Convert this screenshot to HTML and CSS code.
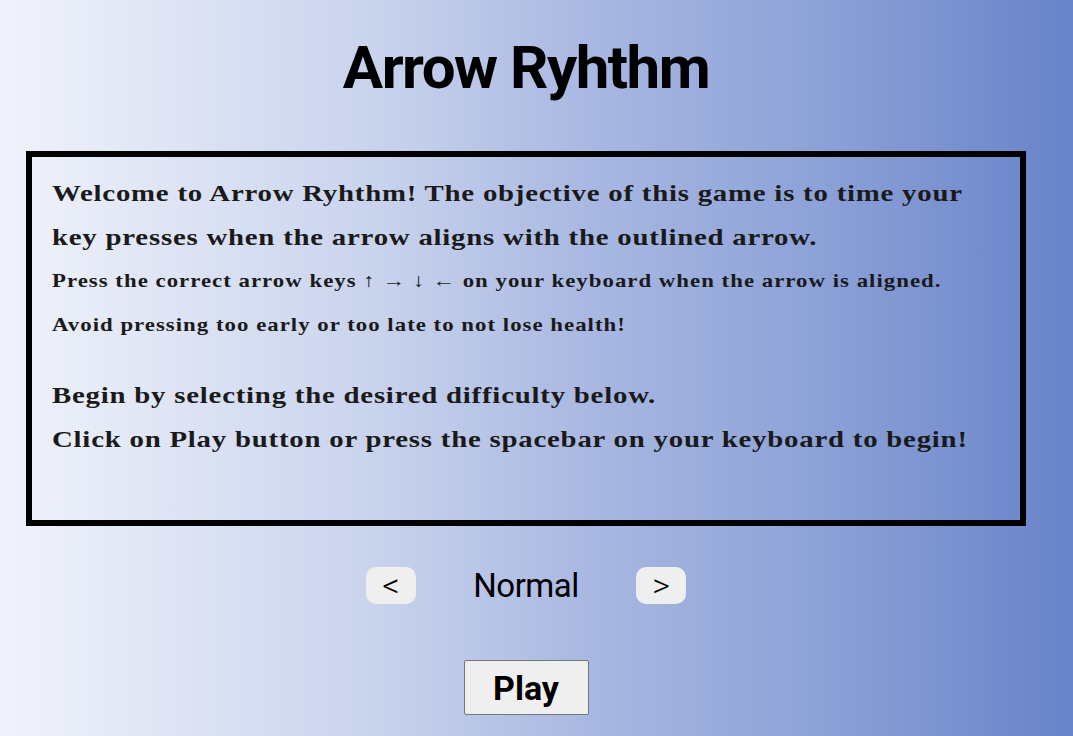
FILE: index.html
```html
<!DOCTYPE html>
<html>
<head>
<meta charset="utf-8">
<link rel="stylesheet" href="styles.css">
</head>
<body>
<main class="page">
  <h1 class="title">Arrow Ryhthm</h1>
  <section class="info">
    <p class="lead">Welcome to Arrow Ryhthm! The objective of this game is to time your key presses when the arrow aligns with the outlined arrow.</p>
    <p class="small">Press the correct arrow keys ↑ → ↓ ← on your keyboard when the arrow is aligned.</p>
    <p class="small">Avoid pressing too early or too late to not lose health!</p>
    <p class="lead gap">Begin by selecting the desired difficulty below.<br>Click on Play button or press the spacebar on your keyboard to begin!</p>
  </section>
  <div class="difficulty">
    <button class="arrow">&lt;</button>
    <span class="level">Normal</span>
    <button class="arrow">&gt;</button>
  </div>
  <button class="play">Play</button>
</main>
</body>
</html>
```
FILE: styles.css
```css
html, body {
  margin: 0;
  padding: 0;
  height: 100%;
}
body {
  background: linear-gradient(to right, #f0f3fb 0%, #c9d3ed 35%, #a9b8e2 55%, #8ea3d8 75%, #6883c9 100%);
  overflow: hidden;
}
.page {
  width: 1052px;
  display: flex;
  flex-direction: column;
  align-items: center;
  font-family: "Liberation Sans", sans-serif;
}
.title {
  margin: 33px 0 0;
  font-family: "Roboto", sans-serif;
  font-weight: 700;
  font-size: 60px;
  letter-spacing: -1.5px;
  line-height: 70px;
  color: #000;
}
.info {
  box-sizing: border-box;
  width: 1000px;
  height: 375px;
  margin-top: 48px;
  border: 6px solid #000;
  padding: 14px 20px;
  font-family: "Liberation Serif", serif;
  font-weight: 700;
  color: #1a1a1a;
}
.info p {
  margin: 0;
  width: 790px;
  transform: scaleX(1.2);
  transform-origin: left center;
}
.lead {
  font-size: 24px;
  line-height: 44px;
  letter-spacing: 0.65px;
}
.small {
  font-size: 19px;
  line-height: 44px;
  letter-spacing: 0.85px;
}
.gap {
  margin-top: 26px !important;
}
.difficulty {
  display: flex;
  align-items: center;
  margin-top: 40px;
}
.arrow {
  width: 50px;
  height: 37px;
  border: none;
  border-radius: 10px;
  background: #efefef;
  font-family: "Roboto", sans-serif;
  font-weight: 300;
  font-size: 34px;
  line-height: 37px;
  padding: 0;
  color: #000;
}
.level {
  width: 220px;
  text-align: center;
  font-family: "Roboto", sans-serif;
  font-size: 33px;
  letter-spacing: -0.5px;
  color: #000;
}
.play {
  margin-top: 55px;
  width: 125px;
  height: 55px;
  border: 1px solid #767676;
  border-radius: 2px;
  background: #efefef;
  font-family: "Roboto", sans-serif;
  font-weight: 700;
  font-size: 34px;
  padding: 0;
  color: #000;
}
```
